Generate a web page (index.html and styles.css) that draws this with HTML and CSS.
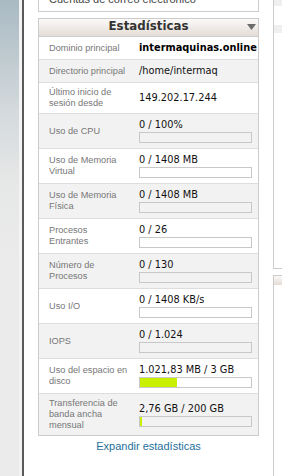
FILE: index.html
```html
<!DOCTYPE html>
<html lang="es">
<head>
<meta charset="utf-8">
<title>Estadísticas</title>
<link rel="stylesheet" href="styles.css">
</head>
<body>
<div class="page">
  <div class="rail"></div>
  <div class="rail-edge"></div>
  <main class="content">
    <section class="column">
      <div class="card-top">Cuentas de correo electrónico</div>
      <div class="stats">
        <div class="stats-head">
          <span></span>
          <h2 class="stats-title">Estadísticas</h2>
          <svg class="toggle" width="9" height="6" viewBox="0 0 9 6"><polygon points="0,0 9,0 4.5,6" fill="#6b6b6b"/></svg>
        </div>
        <table class="stats-table">
          <colgroup><col class="col-label"><col class="col-value"></colgroup>
          <tr><td class="lbl">Dominio principal</td><td class="val"><b class="domain">intermaquinas.online</b></td></tr>
          <tr><td class="lbl">Directorio principal</td><td class="val">/home/intermaq</td></tr>
          <tr><td class="lbl">Último inicio de sesión desde</td><td class="val">149.202.17.244</td></tr>
          <tr><td class="lbl">Uso de CPU</td><td class="val"><div class="num">0 / 100%</div><div class="bar"></div></td></tr>
          <tr><td class="lbl">Uso de Memoria Virtual</td><td class="val"><div class="num">0 / 1408 MB</div><div class="bar"></div></td></tr>
          <tr><td class="lbl">Uso de Memoria Física</td><td class="val"><div class="num">0 / 1408 MB</div><div class="bar"></div></td></tr>
          <tr><td class="lbl">Procesos Entrantes</td><td class="val"><div class="num">0 / 26</div><div class="bar"></div></td></tr>
          <tr><td class="lbl">Número de Procesos</td><td class="val"><div class="num">0 / 130</div><div class="bar"></div></td></tr>
          <tr><td class="lbl">Uso I/O</td><td class="val"><div class="num">0 / 1408 KB/s</div><div class="bar"></div></td></tr>
          <tr><td class="lbl">IOPS</td><td class="val"><div class="num">0 / 1.024</div><div class="bar"></div></td></tr>
          <tr><td class="lbl">Uso del espacio en disco</td><td class="val"><div class="num">1.021,83 MB / 3 GB</div><div class="bar"><div class="fill" style="width:33.3%"></div></div></td></tr>
          <tr><td class="lbl">Transferencia de banda ancha mensual</td><td class="val"><div class="num">2,76 GB / 200 GB</div><div class="bar"><div class="fill" style="width:1.4%"></div></div></td></tr>
        </table>
      </div>
      <a class="expand" href="#">Expandir estadísticas</a>
    </section>
    <aside class="side">
      <div class="side-card side-card-a">
        <div class="side-band side-band-top"></div>
        <div class="side-gap"></div>
        <div class="side-band side-band-mid"></div>
      </div>
      <div class="side-card side-card-b">
        <div class="side-head"></div>
      </div>
    </aside>
  </main>
</div>
</body>
</html>
```
FILE: styles.css
```css
html, body {
  margin: 0;
  padding: 0;
  background: #fff;
}
body {
  width: 282px;
  height: 476px;
  overflow: hidden;
  font-family: "Liberation Sans", Arial, sans-serif;
}
.page {
  display: flex;
  height: 476px;
  overflow: hidden;
}
.rail {
  flex: none;
  width: 19px;
  background: linear-gradient(#a9bac3 0px, #d3d9dc 110px, #e6e7e7 180px, #ebebeb 260px, #ebebeb);
}
.rail-edge {
  flex: none;
  width: 3px;
  background: #f3f3f3;
  border-right: 2px solid #5a5a5a;
}
.content {
  display: flex;
  align-items: flex-start;
  gap: 14px;
  padding-left: 14px;
  margin-top: -15px;
}
.column {
  flex: none;
  width: 221px;
}
.card-top {
  border: 1px solid #ccc;
  padding: 6px 10px 5px;
  font-size: 11px;
  line-height: 14px;
  color: #444;
}
.stats {
  margin-top: 6px;
  border: 1px solid #ccc;
}
.stats-head {
  display: grid;
  grid-template-columns: 1fr auto 1fr;
  height: 17px;
  padding: 0 2px 0 2px;
  background: linear-gradient(#fbfaf9, #e4dcd5);
  border-bottom: 1px solid #ccc;
}
.stats-title {
  margin: 0;
  font-family: "DejaVu Sans", sans-serif;
  font-weight: bold;
  font-size: 11.8px;
  line-height: 14px;
  color: #333;
}
.toggle {
  justify-self: end;
  margin-top: 5px;
}
.stats-table {
  width: 219px;
  border-collapse: separate;
  border-spacing: 0;
  table-layout: fixed;
}
.col-label { width: 96px; }
.col-value { width: 123px; }
.stats-table td {
  vertical-align: middle;
  border-bottom: 1px solid #ddd;
}
.stats-table tr:last-child td {
  border-bottom: none;
}
.stats-table tr:nth-child(even) td {
  background: #f2f2f2;
}
.lbl {
  padding: 4px 6px 4px 10px;
  font-family: "Liberation Sans", Arial, sans-serif;
  font-size: 9.2px;
  line-height: 11px;
  color: #777;
}
.val {
  padding: 4px 6px 4px 4px;
  font-family: "DejaVu Sans", sans-serif;
  font-size: 9.8px;
  line-height: 14px;
  color: #111;
  white-space: nowrap;
}
.domain {
  font-weight: bold;
  color: #000;
}
.bar {
  box-sizing: border-box;
  height: 11px;
  margin-bottom: 1px;
  border: 1px solid #c8c8c8;
}
.fill {
  height: 100%;
  background: #c8f000;
}
.expand {
  display: block;
  margin-top: 3px;
  text-align: center;
  font-size: 11px;
  line-height: 14px;
  color: #1f6f9c;
  text-decoration: none;
}
.side {
  flex: none;
  width: 60px;
  display: flex;
  flex-direction: column;
  gap: 6px;
}
.side-card {
  border: 1px solid #ccc;
  border-right: none;
}
.side-card-a {
  height: 282px;
  display: flex;
  flex-direction: column;
}
.side-band-top {
  height: 20px;
  background: #efefef;
}
.side-gap {
  height: 19px;
}
.side-band-mid {
  height: 8px;
  background: #efefef;
}
.side-card-b {
  height: 260px;
}
.side-head {
  height: 9px;
  background: linear-gradient(#faf9f8, #e4dcd5);
}
```
